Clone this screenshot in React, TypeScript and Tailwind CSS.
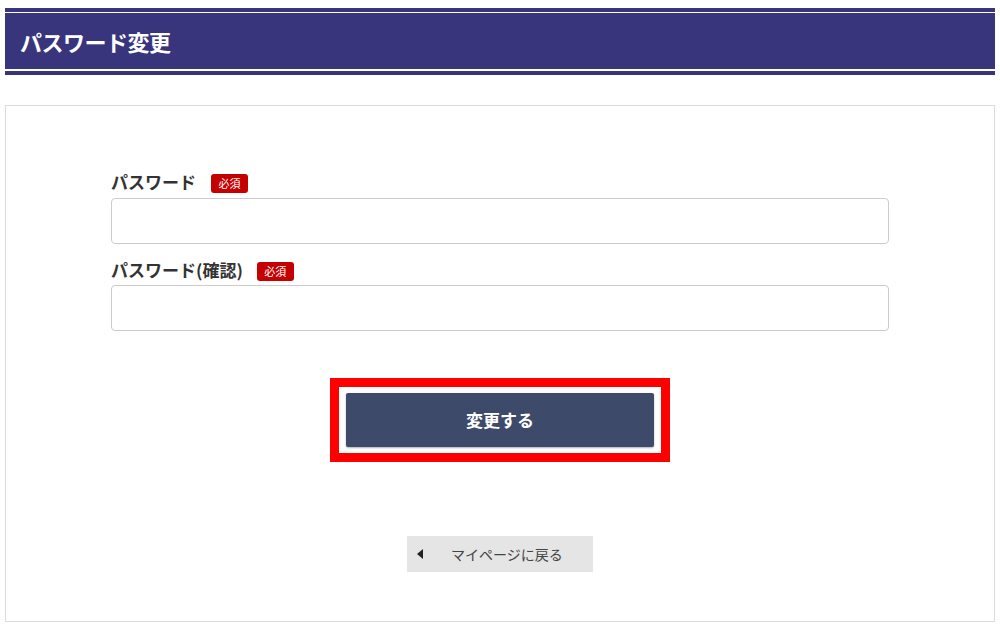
import React from "react";

const jp = { fontFamily: '"Noto Sans CJK JP", "Noto Sans", sans-serif' };

function Badge() {
  return (
    <span className="inline-flex items-center justify-center w-[37px] h-[19px] rounded-[3px] bg-[#c40000] text-white text-[11px] leading-none font-normal">
      必須
    </span>
  );
}

export default function App() {
  return (
    <div className="w-[1000px] h-[629px] bg-white overflow-hidden" style={jp}>
      <div className="pt-[8px] px-[5px]">
        <div className="bg-[#38357d] h-[4px]" />
        <div className="h-[1px]" />
        <div className="bg-[#38357d] h-[56px] flex items-center pl-[15px]">
          <h1 className="text-white font-bold text-[22px] leading-none tracking-[-0.5px]">パスワード変更</h1>
        </div>
        <div className="h-[2px]" />
        <div className="bg-[#38357d] h-[4px]" />
      </div>

      <div className="mx-[5px] mt-[30px] h-[517px] border border-[#dcdcdc] pt-[64px]">
        <div className="w-[778px] mx-auto">
          <div className="h-[22px] mb-[6px] flex items-center">
            <span className="text-[17px] font-bold text-[#333] leading-none">パスワード</span>
            <span className="ml-[15px]"><Badge /></span>
          </div>
          <input type="password" className="block w-full h-[46px] border border-[#cccccc] rounded-[4px] bg-white outline-none" />
          <div className="h-[22px] mt-[14px] mb-[5px] flex items-center">
            <span className="text-[17px] font-bold text-[#333] leading-none">パスワード(確認)</span>
            <span className="ml-[14px]"><Badge /></span>
          </div>
          <input type="password" className="block w-full h-[46px] border border-[#cccccc] rounded-[4px] bg-white outline-none" />
        </div>

        <div className="mt-[47px] flex justify-center">
          <div className="w-[340px] h-[84px] border-[9px] border-[#ff0000] px-[7px] py-[6px]">
            <button className="w-full h-[54px] bg-[#3e4a6a] rounded-[2px] text-white font-bold text-[17px] shadow-[0_1px_2px_rgba(0,0,0,0.3)]">
              変更する
            </button>
          </div>
        </div>

        <div className="mt-[74px] flex justify-center">
          <button className="w-[186px] h-[36px] bg-[#e5e5e5] flex items-center text-[14px] text-[#444]">
            <span className="ml-[10px] w-0 h-0 border-y-[5px] border-y-transparent border-r-[6px] border-r-[#222]" />
            <span className="ml-[28px]">マイページに戻る</span>
          </button>
        </div>
      </div>
    </div>
  );
}
